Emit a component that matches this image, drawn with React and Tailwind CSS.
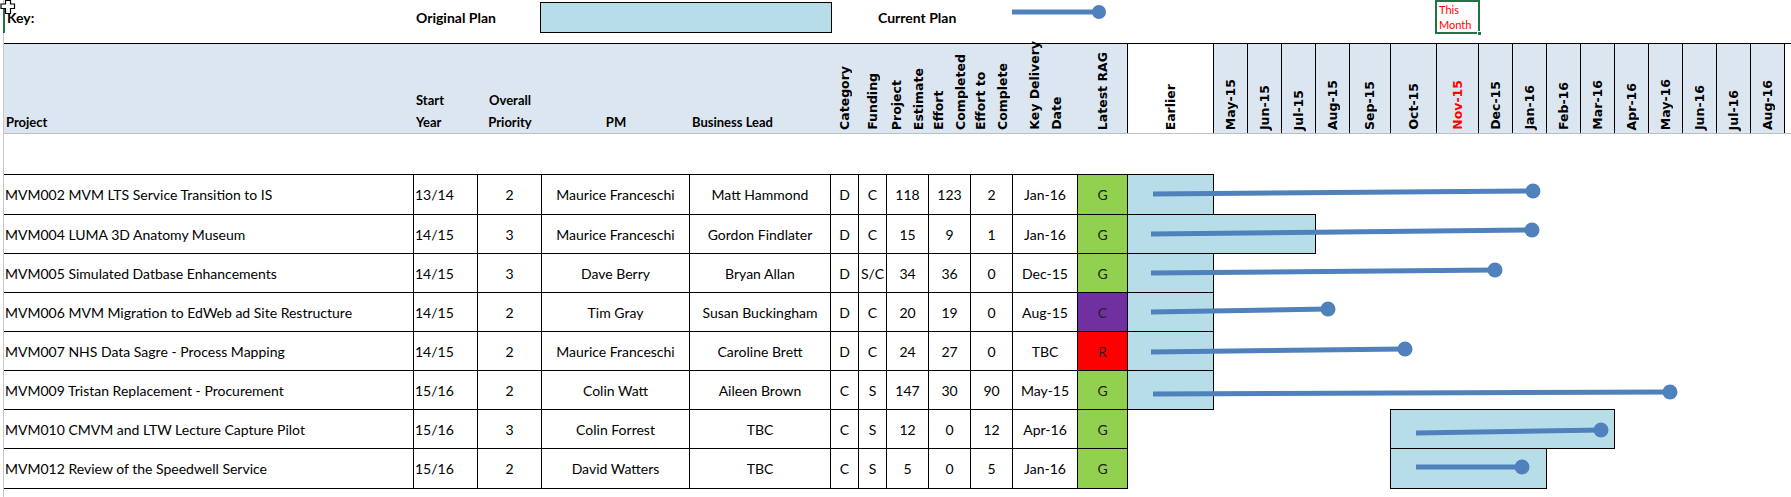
import React from "react";

const ROWS = [
  { project: "MVM002 MVM LTS Service Transition to IS", start: "13/14", priority: "2", pm: "Maurice Franceschi", lead: "Matt Hammond", cat: "D", fund: "C", est: "118", done: "123", todo: "2", date: "Jan-16", rag: "G", hc: "h-[40px]", h: 40, bar: [1127, 1213], line: [1153, 19, 1533, 16] },
  { project: "MVM004 LUMA 3D Anatomy Museum", start: "14/15", priority: "3", pm: "Maurice Franceschi", lead: "Gordon Findlater", cat: "D", fund: "C", est: "15", done: "9", todo: "1", date: "Jan-16", rag: "G", hc: "h-[39px]", h: 39, bar: [1127, 1315], line: [1151, 19, 1532, 15] },
  { project: "MVM005 Simulated Datbase Enhancements", start: "14/15", priority: "3", pm: "Dave Berry", lead: "Bryan Allan", cat: "D", fund: "S/C", est: "34", done: "36", todo: "0", date: "Dec-15", rag: "G", hc: "h-[39px]", h: 39, bar: [1127, 1213], line: [1151, 19, 1495, 16] },
  { project: "MVM006 MVM Migration to EdWeb ad Site Restructure", start: "14/15", priority: "2", pm: "Tim Gray", lead: "Susan Buckingham", cat: "D", fund: "C", est: "20", done: "19", todo: "0", date: "Aug-15", rag: "C", hc: "h-[39px]", h: 39, bar: [1127, 1213], line: [1151, 19, 1328, 16] },
  { project: "MVM007 NHS Data Sagre - Process Mapping", start: "14/15", priority: "2", pm: "Maurice Franceschi", lead: "Caroline Brett", cat: "D", fund: "C", est: "24", done: "27", todo: "0", date: "TBC", rag: "R", hc: "h-[39px]", h: 39, bar: [1127, 1213], line: [1151, 20, 1405, 17] },
  { project: "MVM009 Tristan Replacement - Procurement", start: "15/16", priority: "2", pm: "Colin Watt", lead: "Aileen Brown", cat: "C", fund: "S", est: "147", done: "30", todo: "90", date: "May-15", rag: "G", hc: "h-[39px]", h: 39, bar: [1127, 1213], line: [1153, 23, 1670, 21] },
  { project: "MVM010 CMVM and LTW Lecture Capture Pilot", start: "15/16", priority: "3", pm: "Colin Forrest", lead: "TBC", cat: "C", fund: "S", est: "12", done: "0", todo: "12", date: "Apr-16", rag: "G", hc: "h-[39px]", h: 39, bar: [1390, 1614], line: [1416, 23, 1601, 20] },
  { project: "MVM012 Review of the Speedwell Service", start: "15/16", priority: "2", pm: "David Watters", lead: "TBC", cat: "C", fund: "S", est: "5", done: "0", todo: "5", date: "Jan-16", rag: "G", hc: "h-[40px]", h: 40, bar: [1390, 1546], line: [1416, 18, 1522, 18] },
];

const MONTHS = [
  ["May-15", "w-[34px]"],
  ["Jun-15", "w-[34px]"],
  ["Jul-15", "w-[34px]"],
  ["Aug-15", "w-[34px]"],
  ["Sep-15", "w-[41px]"],
  ["Oct-15", "w-[46px]"],
  ["Nov-15", "w-[42px]", true],
  ["Dec-15", "w-[34px]"],
  ["Jan-16", "w-[34px]"],
  ["Feb-16", "w-[34px]"],
  ["Mar-16", "w-[34px]"],
  ["Apr-16", "w-[34px]"],
  ["May-16", "w-[34px]"],
  ["Jun-16", "w-[34px]"],
  ["Jul-16", "w-[34px]"],
  ["Aug-16", "w-[34px]"],
];

const RAG = {
  G: "bg-[#92d050]",
  C: "bg-[#7030a0]",
  R: "bg-[#ff0000]",
};

const GANTT_X = 1128;
const BLUE = "#4f81bd";

// rotated header text, reads bottom to top
function VLabel({ lines, red }) {
  return (
    <div
      className={`[writing-mode:vertical-rl] rotate-180 whitespace-nowrap font-['DejaVu_Sans',sans-serif] text-[12.5px] font-bold leading-[22px] ${
        red ? "text-[#ff0000]" : "text-black"
      }`}
    >
      {lines.map((l) => (
        <div key={l}>{l}</div>
      ))}
    </div>
  );
}

function VHead({ w, lines, className = "" }) {
  return (
    <div className={`${w} flex flex-col items-center justify-end pb-[3px] ${className}`}>
      <VLabel lines={lines} />
    </div>
  );
}

function Cell({ w, children, left, className = "" }) {
  return (
    <div
      className={`${w} flex items-center border-r border-black ${
        left ? "justify-start pl-[1px]" : "justify-center"
      } ${className}`}
    >
      <span className="whitespace-nowrap">{children}</span>
    </div>
  );
}

function Cursor() {
  return (
    <svg className="absolute left-0 top-0" width="16" height="15" viewBox="0 0 16 15">
      <path
        d="M5.5 0.5 H10.5 V4 H14.5 V8.5 H10.5 V13.5 H5.5 V8.5 H1 V4 H5.5 Z"
        fill="#fff"
        stroke="#000"
        strokeWidth="1.2"
      />
    </svg>
  );
}

export default function App() {
  return (
    <div className="relative h-[497px] w-[1791px] overflow-hidden bg-white font-['Lato',sans-serif] text-black">
      <div className="ml-[3px] h-full border-l border-[#c6c6c6]">
        {/* key */}
        <div className="flex h-[43px] items-start text-[14px] font-bold">
          <div className="w-[410px] pl-[3px] pt-[7px]">Key:</div>
          <div className="w-[126px] pl-[2px] pt-[7px]">Original Plan</div>
          <div className="mt-[2px] h-[31px] w-[292px] border border-black bg-[#b7dee8]" />
          <div className="ml-[46px] w-[134px] pt-[7px]">Current Plan</div>
          <svg width="100" height="30" className="shrink-0">
            <line x1="0" y1="12" x2="87" y2="12" stroke={BLUE} strokeWidth="5" />
            <circle cx="87" cy="12" r="7" fill={BLUE} />
          </svg>
          <div className="relative ml-[323px] h-[34px] w-[45px] border-2 border-[#217346] pl-[2px] text-[11px] font-normal leading-[15px] text-[#ff0000]">
            <div>This</div>
            <div>Month</div>
            <div className="absolute -bottom-[4px] -right-[4px] h-[5px] w-[5px] border border-white bg-[#217346]" />
          </div>
        </div>

        {/* header */}
        <div className="flex h-[91px] border-b border-t border-b-[#bfbfbf] border-t-black">
          <div className="flex w-[1124px] bg-[#dce6f1] text-[13px] font-bold leading-[22px]">
            <div className="flex w-[410px] items-end pl-[2px]">Project</div>
            <div className="flex w-[64px] flex-col justify-end pl-[2px]">
              <div>Start</div>
              <div>Year</div>
            </div>
            <div className="flex w-[64px] flex-col items-center justify-end">
              <div>Overall</div>
              <div>Priority</div>
            </div>
            <div className="flex w-[148px] items-end justify-center">PM</div>
            <div className="flex w-[141px] items-end pl-[2px]">Business Lead</div>
            <VHead w="w-[28px]" lines={["Category"]} />
            <VHead w="w-[28px]" lines={["Funding"]} />
            <VHead w="w-[42px]" lines={["Project", "Estimate"]} />
            <VHead w="w-[42px]" lines={["Effort", "Completed"]} />
            <VHead w="w-[42px]" lines={["Effort to", "Complete"]} />
            <VHead w="w-[65px]" lines={["Key Delivery", "Date"]} />
            <VHead w="w-[50px]" lines={["Latest RAG"]} className="border-r border-black" />
          </div>
          <VHead w="w-[86px]" lines={["Earlier"]} className="border-r border-black bg-white" />
          {MONTHS.map(([m, w, red]) => (
            <div
              key={m}
              className={`${w} flex flex-col items-center justify-end border-r border-black bg-[#dce6f1] pb-[3px]`}
            >
              <VLabel lines={[m]} red={red} />
            </div>
          ))}
          <div className="flex-1" />
        </div>

        {/* empty row */}
        <div className="h-[40px]" />

        {/* data */}
        <div className="h-px w-[1124px] bg-black" />
        {ROWS.map((r) => (
          <div key={r.project} className={`flex ${r.hc} text-[14px]`}>
            <div className="flex w-[1124px] border-b border-black">
              <Cell w="w-[410px]" left>{r.project}</Cell>
              <Cell w="w-[64px]" left>{r.start}</Cell>
              <Cell w="w-[64px]">{r.priority}</Cell>
              <Cell w="w-[148px]">{r.pm}</Cell>
              <Cell w="w-[141px]">{r.lead}</Cell>
              <Cell w="w-[28px]">{r.cat}</Cell>
              <Cell w="w-[28px]">{r.fund}</Cell>
              <Cell w="w-[42px]">{r.est}</Cell>
              <Cell w="w-[42px]">{r.done}</Cell>
              <Cell w="w-[42px]">{r.todo}</Cell>
              <Cell w="w-[65px]">{r.date}</Cell>
              <Cell w="w-[50px]" className={`${RAG[r.rag]} text-[#222]`}>{r.rag}</Cell>
            </div>
            <div className="relative w-[662px]">
              <div
                className="absolute -top-px border border-black bg-[#b7dee8]"
                style={{
                  left: r.bar[0] - GANTT_X,
                  width: r.bar[1] - r.bar[0] + 1,
                  height: r.h + 1,
                }}
              />
              <svg
                className="absolute left-0 top-0 overflow-visible"
                width="662"
                height={r.h}
              >
                <line
                  x1={r.line[0] - GANTT_X}
                  y1={r.line[1]}
                  x2={r.line[2] - GANTT_X}
                  y2={r.line[3]}
                  stroke={BLUE}
                  strokeWidth="5"
                />
                <circle cx={r.line[2] - GANTT_X} cy={r.line[3]} r="7.5" fill={BLUE} />
              </svg>
            </div>
          </div>
        ))}
      </div>

      {/* selection marker + pointer */}
      <div className="absolute left-[3px] top-[7px] h-[26px] w-[2px] bg-[#217346]" />
      <Cursor />
    </div>
  );
}
